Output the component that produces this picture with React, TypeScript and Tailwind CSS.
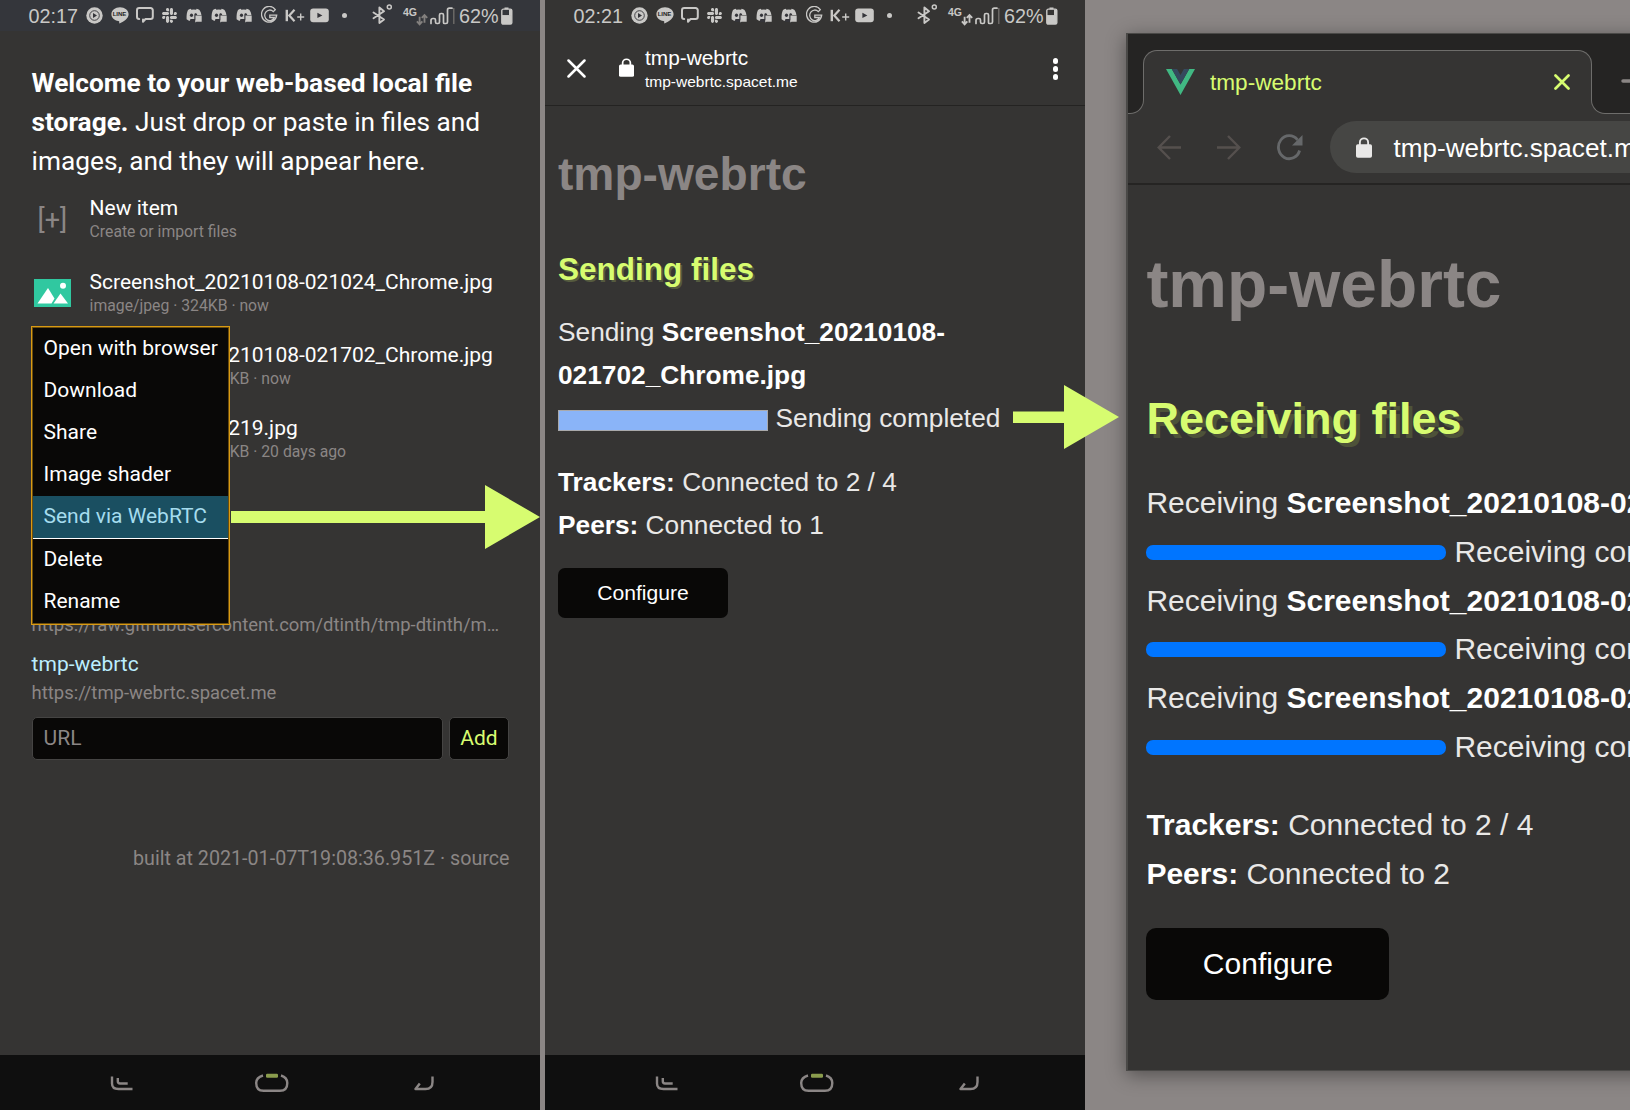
import React from "react";
import { FaSlack } from "react-icons/fa";

const ICON = "#c9c8c6";

function MusicIcon() {
  return (
    <svg width="17" height="17" viewBox="0 0 17 17">
      <circle cx="8.5" cy="8.5" r="8.200" fill={ICON} />
      <circle cx="8.5" cy="8.5" r="4.800" fill="none" stroke="#35353a" strokeWidth=".9" />
      <path d="M7 6l4 2.5L7 11z" fill="#35353a" />
    </svg>
  );
}

function LineIcon() {
  return (
    <div className="relative h-[17px] w-[18px]">
      <svg width="18" height="17" viewBox="0 0 18 17" className="block">
        <path d="M9 .3C4.2.3.4 3.400.4 7.200c0 3.400 3 6.200 7 6.800.9.2 1 .6.8 1.500-.1.7 0 1.100.8.800 3.800-1.800 8.600-5 8.600-9.100C17.600 3.400 13.800.3 9 .3z" fill={ICON} />
      </svg>
      <span className="absolute inset-x-0 top-[3px] text-center text-[6px] leading-[8px] font-bold text-[#1f1f22]">LINE</span>
    </div>
  );
}

function ChatIcon() {
  return (
    <svg width="18" height="17" viewBox="0 0 18 17" fill="none" stroke={ICON} strokeWidth="2" strokeLinejoin="round" strokeLinecap="round">
      <path d="M3.200 12A2.200 2.200 0 0 1 1 9.800V3.300A2.200 2.200 0 0 1 3.200 1.100H14.600a2.200 2.200 0 0 1 2.200 2.200v6.500a2.200 2.200 0 0 1-2.200 2.200H9.500L7 14.800v-2.300" />
    </svg>
  );
}

function DiscordIcon() {
  return (
    <svg width="17" height="15" viewBox="0 0 17 15">
      <path
        d="M4.800.8C3.600 1 2.700 1.400 2 1.900.9 4.100.4 6.800.6 11.200c1 .9 2 1.400 3.400 1.600l1-1.800c1.300.4 2.200.5 3.600.4V7h6.800c-.2-2-.9-3.600-1.900-5.100-.8-.5-1.700-.9-2.900-1.100l-.5 1a11 11 0 0 0-4.800 0z"
        fill={ICON}
      />
      <ellipse cx="5.500" cy="7.200" rx="1.600" ry="1.700" fill="#35353a" />
      <path d="M8.800 5.600c.8-.7 2.400 0 2.400 1.500H8.300c0-.6.100-1.200.5-1.500z" fill="#35353a" />
      <path d="M9.200 7.500h6.500v6.300h-5.200L9.200 14.500z" fill={ICON} />
      <path d="M8.900 7.100v5" stroke="#35353a" strokeWidth=".8" />
      <path d="M4.500 11h4.400v3H4z" fill="#35353a" />
    </svg>
  );
}

function GoogleIcon() {
  return (
    <svg width="17" height="19" viewBox="0 0 17 19" fill="none" stroke={ICON}>
      <path d="M14.300 3.600A7.600 7.900 0 1 0 15.700 9.200H8.800V11.500H13.300A5 5.300 0 1 1 12.300 5.600z" strokeWidth="1.300" />
    </svg>
  );
}

function KPlusIcon() {
  return (
    <svg width="20" height="13" viewBox="0 0 20 13" fill="none" stroke={ICON}>
      <path d="M1.800.8v11.400" strokeWidth="2.400" />
      <path d="M9.500.8L4.300 6.500l5.200 5.700" strokeWidth="2.200" />
      <path d="M15.700 4.500v7M12.200 8h7" strokeWidth="1.400" />
    </svg>
  );
}

function YoutubeIcon() {
  return (
    <svg width="19" height="15" viewBox="0 0 19 15">
      <rect x=".2" y=".6" width="18.600" height="13.600" rx="3" fill={ICON} />
      <path d="M7.400 4.700l5 2.700-5 2.700z" fill="#35353a" />
    </svg>
  );
}

function BluetoothIcon() {
  return (
    <svg width="21" height="21" viewBox="0 0 21 21" fill="none" stroke={ICON}>
      <path d="M1.500 8.500l10.500 7L7.400 19V3.500l4.600 3.800-10.500 7" strokeWidth="1.900" strokeLinejoin="round" strokeLinecap="round" />
      <circle cx="17.300" cy="2.900" r="2" strokeWidth="1.500" />
    </svg>
  );
}

function SignalIcon() {
  return (
    <svg width="25" height="18" viewBox="0 0 25 18" fill="none" strokeWidth="1.700">
      <path d="M1 16.500v-3q0-2 2-2h1q1.500 0 1.500 1.500v2q0 1.500 1.500 1.500h1q1.500 0 1.500-1.500V8q0-1.500 1.500-1.500h1q1.500 0 1.500 1.500v7.500q0 1 1 1h1.500q1.500 0 1.500-1.500V3q0-1.800 1.800-1.800H22" stroke={ICON} strokeLinecap="round" />
      <path d="M23.800 1v16" stroke="#73706d" strokeWidth="1.300" />
    </svg>
  );
}

function BatteryIcon() {
  return (
    <svg width="12" height="18" viewBox="0 0 12 19" preserveAspectRatio="none">
      <path d="M3.500 2.500V.5h4v2" fill={ICON} />
      <rect x=".8" y="2.300" width="10" height="15.800" rx="1.500" fill="none" stroke={ICON} strokeWidth="1.400" />
      <rect x="1" y="8.500" width="9.600" height="9.500" fill={ICON} />
      <path d="M8 2.500h3V9H8z" fill={ICON} />
    </svg>
  );
}

function StatusBar({ time, tinted, arrowColor }: { time: string; tinted?: boolean; arrowColor: string }) {
  const icons = [
    <MusicIcon />,
    <LineIcon />,
    <ChatIcon />,
    <FaSlack size={17} color={ICON} />,
    <DiscordIcon />,
    <DiscordIcon />,
    <DiscordIcon />,
    <GoogleIcon />,
    <KPlusIcon />,
    <YoutubeIcon />,
  ];
  return (
    <div
      className={`flex h-[31px] shrink-0 items-center pl-[28px] font-['Liberation_Sans'] text-[19.8px] leading-[31px] text-[#c9c8c6] ${
        tinted ? "bg-[#34363b]" : "bg-[#353433]"
      }`}
    >
      <span className="w-[54px] pt-px pl-[0.600px] leading-[30px]">{time}</span>
      {icons.map((icon, i) => (
        <span key={i} className="flex w-[25px] justify-center">
          {icon}
        </span>
      ))}
      <span className="ml-[10px] size-[5px] rounded-full bg-[#c9c8c6]" />
      <span className="mb-[2px] ml-[25px]">
        <BluetoothIcon />
      </span>
      <span className="mb-[6px] ml-[10px] w-[14px] text-[10.500px] leading-none font-bold">4G</span>
      <svg width="12" height="13" viewBox="0 0 11 12" className="mt-[8px] -ml-[1px]" fill="none" stroke={arrowColor} strokeWidth="1.700">
        <path d="M3.300 3.500v6.500M.8 7.800l2.500 2.700 2.500-2.700" />
        <path d="M7.800 9V2.500M5.300 4.600l2.500-2.700 2.500 2.700" />
      </svg>
      <span className="ml-[2px]">
        <SignalIcon />
      </span>
      <span className="ml-[4px] w-[41.500px] pt-px leading-[30px]">62%</span>
      <BatteryIcon />
    </div>
  );
}

function NavBar() {
  return (
    <div className="flex h-[55px] shrink-0 items-start bg-[#0f0f0f] pt-[18px] pl-[110px]">
      <svg width="24" height="24" viewBox="0 0 24 24" fill="none" stroke="#8b8685" strokeWidth="2.400">
        <path d="M2 3.500v7q0 5.500 6.500 5.500H22.500" />
        <path d="M7.800 5v3.300q0 2.200 2.200 2.200H17.700" />
      </svg>
      <svg width="36" height="24" viewBox="0 0 36 24" className="ml-[120px]" fill="none">
        <path d="M9 2.500Q2.200 4.500 2.200 10q0 7.800 7.300 7.800h16.500q7.300 0 7.300-7.800Q33.300 4.500 27 2.500" stroke="#8b8685" strokeWidth="2.400" />
        <rect x="12" y=".8" width="12" height="4" rx="1.200" fill="#8a9c4d" />
      </svg>
      <svg width="24" height="24" viewBox="0 0 24 24" className="ml-[122px]" fill="none" stroke="#8b8685" strokeWidth="2.400">
        <path d="M20.500 3.500v5.500q0 7-7 7H3.500l4.300-5.500" strokeLinejoin="round" />
      </svg>
    </div>
  );
}

function PictureIcon() {
  return (
    <svg width="37" height="28" viewBox="0 0 37 28">
      <rect width="37" height="28" fill="#30c8a0" />
      <path d="M3.500 24.500L14 9l6.500 10.500-3 5z" fill="#fff" />
      <path d="M19.500 24.500L26.500 14.500l7.500 10z" fill="#fff" />
      <circle cx="29" cy="6.700" r="3" fill="#fff" />
    </svg>
  );
}

function FileRow({ icon, title, detail }: { icon: React.ReactNode; title: string; detail: string }) {
  return (
    <div className="flex h-[73.300px] items-center">
      <div className="flex w-[58px] items-center pt-[2px] pl-[2.400px]">{icon}</div>
      <div className="whitespace-nowrap">
        <div className="text-[21px] leading-[28px] text-white">{title}</div>
        <div className="text-[15.750px] leading-[20px] text-[#8b8685]">{detail}</div>
      </div>
    </div>
  );
}

function MenuItem({ label, active }: { label: string; active?: boolean }) {
  return (
    <div
      className={`h-[42px] px-[10.500px] text-[21px] leading-[41px] whitespace-nowrap ${
        active ? "bg-[#1a4f61] text-[#a5dcee]" : "text-white"
      }`}
    >
      {label}
    </div>
  );
}

function ContextMenu() {
  return (
    <div className="absolute top-[326px] left-[31px] w-[199px] border border-[#d99a12] bg-[#090807]">
      <div className="border border-[#6b4d0e]">
        <MenuItem label="Open with browser" />
        <MenuItem label="Download" />
        <MenuItem label="Share" />
        <MenuItem label="Image shader" />
        <MenuItem label="Send via WebRTC" active />
        <div className="h-px bg-white" />
        <MenuItem label="Delete" />
        <MenuItem label="Rename" />
      </div>
    </div>
  );
}

function StoragePhone() {
  return (
    <section className="relative flex w-[540px] shrink-0 flex-col bg-[#353433] font-['Roboto']">
      <StatusBar time="02:17" tinted arrowColor="#83807e" />
      <div className="flex grow flex-col pt-[33px] pr-[30.500px] pl-[31.600px]">
        <p className="text-[26.250px] leading-[39.200px] whitespace-nowrap text-white">
          <b className="font-bold">
            Welcome to your web-based local file
            <br />
            storage.
          </b>{" "}
          Just drop or paste in files and
          <br />
          images, and they will appear here.
        </p>
        <FileRow icon={<span className="pt-[2px] pl-[3.500px] text-[27px] leading-none text-[#8b8685]">[+]</span>} title="New item" detail="Create or import files" />
        <FileRow icon={<PictureIcon />} title="Screenshot_20210108-021024_Chrome.jpg" detail="image/jpeg · 324KB · now" />
        <FileRow icon={<PictureIcon />} title="Screenshot_20210108-021702_Chrome.jpg" detail="image/jpeg · 1024.5KB · now" />
        <FileRow icon={<PictureIcon />} title="Screenshot_20219.jpg" detail="image/jpeg · 2048.5KB · 20 days ago" />
        <div className="mt-[136px] text-[18.450px] leading-[28px] whitespace-nowrap text-[#8b8685]">
          https://raw.githubusercontent.com/dtinth/tmp-dtinth/m…
        </div>
        <div className="mt-[9px] text-[21px] leading-[32px] text-[#bbeeff]">tmp-webrtc</div>
        <div className="mt-px text-[18.450px] leading-[24px] text-[#8b8685]">https://tmp-webrtc.spacet.me</div>
        <div className="mt-[12px] mr-[0.600px] flex gap-[6px] text-[21px] leading-[41px]">
          <div className="h-[43px] grow rounded-[5px] border border-[#454443] bg-[#090807] pl-[11px] text-[#8b8685]">URL</div>
          <div className="h-[43px] w-[60px] rounded-[5px] border border-[#454443] bg-[#090807] text-center text-[#d7fc70]">Add</div>
        </div>
        <div className="mt-[85px] text-right text-[19.700px] leading-[28px] text-[#8b8685]">built at 2021-01-07T19:08:36.951Z · source</div>
      </div>
      <NavBar />
      <ContextMenu />
      <svg width="310" height="64" viewBox="0 0 310 64" className="absolute top-[485px] left-[230px]">
        <path d="M1 26h254V0l55 32-55 32V38H1z" fill="#d7fc70" />
      </svg>
    </section>
  );
}

function Lock({ width, height, color }: { width: number; height: number; color: string }) {
  return (
    <svg width={width} height={height} viewBox="0 0 14 19" preserveAspectRatio="none">
      <path d="M3.400 8V4.800a3.600 3.600 0 0 1 7.200 0V8" fill="none" stroke={color} strokeWidth="1.600" />
      <rect x="0" y="6.500" width="14" height="12.300" rx="1.600" fill={color} />
    </svg>
  );
}

function SendingPhone() {
  return (
    <section className="relative ml-[5px] flex w-[540px] shrink-0 flex-col bg-[#353433] font-['Liberation_Sans']">
      <StatusBar time="02:21" arrowColor={ICON} />
      <div className="flex h-[75px] items-start border-b border-[#242322] text-white">
        <svg width="19" height="19" viewBox="0 0 19 19" className="mt-[28px] ml-[22px]" stroke="#fff" strokeWidth="2.500" strokeLinecap="round">
          <path d="M1.500 1.500l16 16M17.500 1.500l-16 16" />
        </svg>
        <span className="mt-[27px] ml-[33px]">
          <Lock width={15} height={19} color="#fff" />
        </span>
        <div className="mt-[15px] ml-[11px] grow">
          <div className="text-[20.850px] leading-[24px]">tmp-webrtc</div>
          <div className="mt-[2px] text-[15.520px] leading-[20px]">tmp-webrtc.spacet.me</div>
        </div>
        <div className="mt-[27px] mr-[27px] flex flex-col gap-[2.500px]">
          <i className="size-[5.500px] rounded-full bg-white" />
          <i className="size-[5.500px] rounded-full bg-white" />
          <i className="size-[5.500px] rounded-full bg-white" />
        </div>
      </div>
      <div className="grow pt-[40px] pl-[13px] text-[26.270px] leading-[43.200px] whitespace-nowrap text-[#e9e8e7]">
        <h1 className="text-[46.150px] leading-[56px] font-bold text-[#8b8685]">tmp-webrtc</h1>
        <h2 className="mt-[47px] text-[31.500px] leading-[40px] font-bold text-[#d7fc70] [text-shadow:2px_2px_#555b3f]">Sending files</h2>
        <p className="mt-[22px]">
          Sending <b className="text-white">Screenshot_20210108-<br />021702_Chrome.jpg</b>
        </p>
        <div className="flex h-[43.200px] items-center">
          <span className="mt-[3px] mr-[7.500px] h-[21px] w-[210px] border border-[#a9a9ab] bg-[#8ab4f8]" />
          Sending completed
        </div>
        <p className="mt-[20px]">
          <b className="text-white">Trackers:</b> Connected to 2 / 4
          <br />
          <b className="text-white">Peers:</b> Connected to 1
        </p>
        <div className="mt-[21px] h-[50px] w-[170px] rounded-[7px] bg-[#090807] text-center text-[21.100px] leading-[50px] text-white">Configure</div>
      </div>
      <NavBar />
      <svg width="106" height="64" viewBox="0 0 106 64" className="absolute top-[385px] left-[468px] z-10">
        <path d="M0 26.500h51V0l55 32-55 32V38H0z" fill="#d7fc70" />
      </svg>
    </section>
  );
}

function VueLogo() {
  return (
    <svg width="29" height="26" viewBox="0 0 30 26" preserveAspectRatio="none">
      <path d="M0 0h6l9 15.500L24 0h6L15 26z" fill="#41b883" />
      <path d="M6 0h5.500L15 6l3.500-6H24l-9 15.500z" fill="#35495e" />
    </svg>
  );
}

function Receiving({ file }: { file: string }) {
  return (
    <div>
      <div>
        Receiving <b className="text-white">{file}</b>
      </div>
      <div className="flex h-[48.800px] items-center">
        <span className="mr-[8px] h-[15px] w-[300px] shrink-0 rounded-[7px] bg-[#0075ff]" />
        Receiving completed
      </div>
    </div>
  );
}

function BrowserWindow() {
  return (
    <section className="mt-[33px] ml-[41px] flex h-[1038px] w-[600px] shrink-0 flex-col border-y border-l-2 border-[#4a4947] bg-[#353433] font-['Liberation_Sans'] shadow-[0_4px_18px_rgba(0,0,0,0.4)]">
      <div className="h-[66px] bg-[#252423] pt-[16px]">
        <div className="flex">
          <div className="ml-[15px] flex h-[50px] w-[449px] items-center rounded-t-[14px] border border-b-0 border-[#6e6d6b] bg-[#353433] pt-[13px] pr-[21px] pl-[21.500px]">
            <VueLogo />
            <span className="mt-[1px] ml-[15.500px] grow text-[22.600px] leading-[26px] text-[#d7fc70]">tmp-webrtc</span>
            <svg width="16" height="16" viewBox="0 0 16 16" stroke="#d7fc70" strokeWidth="2.700" strokeLinecap="round">
              <path d="M1.500 1.500l13 13M14.500 1.500l-13 13" />
            </svg>
          </div>
          <svg width="22" height="22" viewBox="0 0 22 22" className="mt-[20px] ml-[29px]" stroke="#8b8685" strokeWidth="3.500" strokeLinecap="round">
            <path d="M2 11h18M11 2v18" />
          </svg>
        </div>
      </div>
      <div className="flex h-[14px] justify-between">
        <div className="w-[16px] rounded-br-[14px] border-r border-b border-[#6e6d6b] bg-[#252423]" />
        <div className="w-[135px] rounded-bl-[14px] border-b border-l border-[#6e6d6b] bg-[#252423]" />
      </div>
      <div className="flex h-[71px] items-start border-b-2 border-[#252423] pt-[7px]">
        <div className="mt-[13px] flex items-center pl-[29px]">
          <svg width="24" height="25" viewBox="0 0 24 25" fill="none" stroke="#55504e" strokeWidth="2.400">
            <path d="M24 12.500H2M13 1L1.700 12.500 13 24" />
          </svg>
          <svg width="24" height="25" viewBox="0 0 24 25" className="ml-[36px]" fill="none" stroke="#55504e" strokeWidth="2.400">
            <path d="M0 12.500h22M11 1l11.300 11.500L11 24" />
          </svg>
          <svg width="26" height="27" viewBox="0 0 26 27" className="ml-[35.500px]" fill="none" stroke="#66686a" strokeWidth="2.800">
            <path d="M22.600 16.500A10.800 11.500 0 1 1 20.500 5.800" />
            <path d="M25.500 1v10.500H15z" fill="#66686a" stroke="none" />
          </svg>
        </div>
        <div className="ml-[27.500px] flex h-[52px] w-[400px] items-center rounded-full bg-[#464644] pl-[26px]">
          <Lock width={16} height={21} color="#e9e8e7" />
          <span className="mt-px ml-[21.500px] text-[26.100px] leading-[52px] text-white">tmp-webrtc.spacet.me</span>
        </div>
      </div>
      <div className="grow overflow-hidden pt-[59px] pl-[18.400px] text-[30px] leading-[48.800px] whitespace-nowrap text-[#e9e8e7]">
        <h1 className="text-[65.900px] leading-[80px] font-bold text-[#8b8685]">tmp-webrtc</h1>
        <h2 className="mt-[67px] text-[45px] leading-[56px] font-bold text-[#d7fc70] [text-shadow:4px_4px_#4d5239]">Receiving files</h2>
        <div className="mt-[32px]">
          <Receiving file="Screenshot_20210108-021024_Chrome.jpg" />
          <Receiving file="Screenshot_20210108-021702_Chrome.jpg" />
          <Receiving file="Screenshot_20210108-021702_Chrome.jpg" />
        </div>
        <p className="mt-[29px]">
          <b className="text-white">Trackers:</b> Connected to 2 / 4
          <br />
          <b className="text-white">Peers:</b> Connected to 2
        </p>
        <div className="mt-[30px] h-[72px] w-[243px] rounded-[10px] bg-[#090807] text-center leading-[72px] text-white">Configure</div>
      </div>
    </section>
  );
}

export default function App() {
  return (
    <main className="flex h-[1110px] w-[1630px] overflow-hidden bg-[#8b8685]">
      <StoragePhone />
      <SendingPhone />
      <BrowserWindow />
    </main>
  );
}
